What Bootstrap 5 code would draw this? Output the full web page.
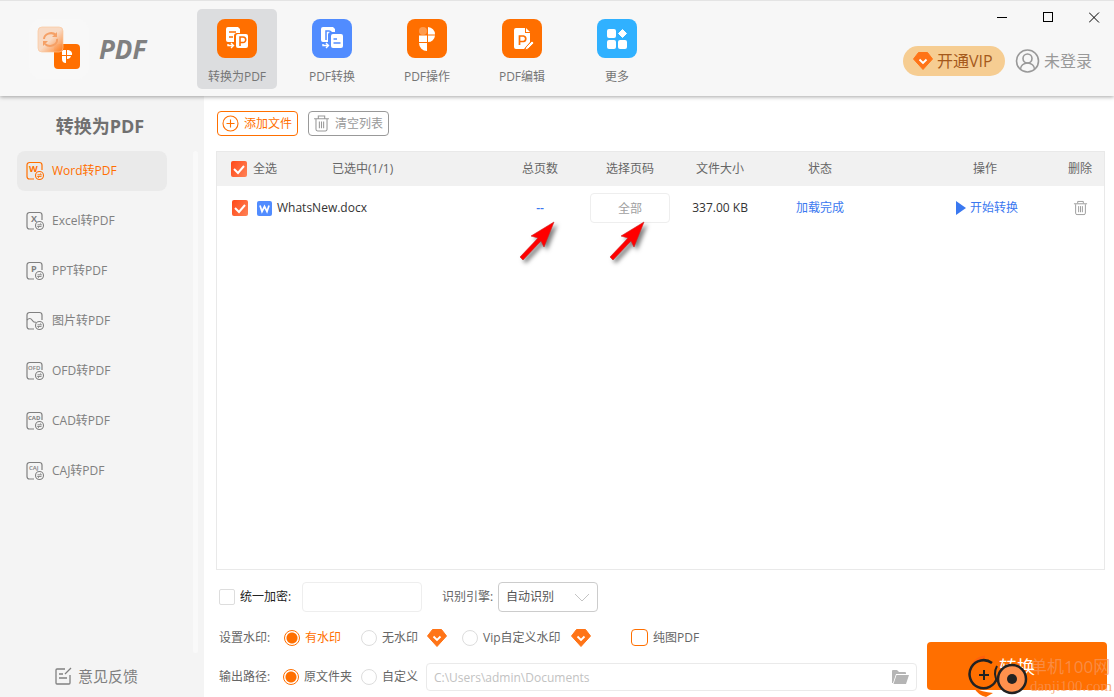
<!DOCTYPE html>
<html lang="zh-CN">
<head>
<meta charset="utf-8">
<meta name="viewport" content="width=device-width, initial-scale=1">
<title>转换为PDF</title>
<link href="https://cdn.jsdelivr.net/npm/bootstrap@5.3.0/dist/css/bootstrap.min.css" rel="stylesheet">
<style>
:root{--brand:#ff6f00;--blue:#3a78f0;--ink:#666;--soft:#808080}
body{font-family:"Open Sans","Noto Sans CJK SC",sans-serif;font-size:12px;line-height:18px;color:var(--ink);background:#fff}
button{font:inherit;color:inherit;background:none;border:0;padding:0}
a{color:inherit;text-decoration:none}
svg{display:block;flex:none}
.topbar{height:96px;background:#f7f7f7;border-top:1px solid #e4e4e4;box-shadow:0 1px 4px rgba(0,0,0,.35);position:relative;padding-left:29px}
.word-logo{font-size:26px;line-height:30px;font-weight:700;font-style:italic;color:#808080}
.brand-box{width:168px;gap:10px}
.tiles{gap:15px}
.tile{width:80px;height:80px;border-radius:5px;padding-top:10px;gap:9px;color:#757575}
.tile.active{background:#dcdddf}
.win-btn{width:40px;height:32px;color:#000}
.win-row{gap:6px}
.account{gap:10px;margin:13px 22px 0 0}
.vip{height:30px;width:102px;border-radius:15px;background:#f6cd92;color:#a5591b;font-size:16px;padding-left:10px}
.user{font-size:16px;color:#999}
.body-row,.work{min-height:0;min-width:0}
.side{width:204px;background:#f4f4f4;padding:17px 0 12px}
.side h1{font-size:18px;line-height:26px;font-weight:700;color:#707070;margin:0 4px 12px 0;text-align:center}
.side nav{gap:10px;margin-left:17px}
.side-link{height:40px;width:150px;border-radius:8px;padding-left:8px;gap:7px;color:var(--soft)}
.side-link.active{background:#eaeaea;color:var(--brand)}
.track{width:5px;background:#f9f9f9;border-radius:3px;margin-right:6px}
.feedback{font-size:15px;color:var(--soft);gap:6px;margin:14px 0 0 54px}
.tools{gap:10px;padding-left:1px}
.tool{height:25px;border:1px solid #999;border-radius:4px;color:#999;width:81px;gap:5px;padding-left:4px}
.tool.primary{border-color:var(--brand);color:var(--brand)}
.work{padding:15px 7px 6px 12px}
.sheet{border:1px solid #e9e9e9;margin:15px 2px 12px 0}
.files{table-layout:fixed;width:100%}
.files th{background:#f1f1f1;height:34px;font-weight:400;text-align:center;padding:0}
.files td{height:44px;text-align:center;padding:0;position:relative}
.files th.lead-cell,.files td.lead-cell{text-align:left}
.files .state{padding-right:35px}
.files .bin{padding-right:4px}
.pages{width:80px;height:30px}
.check-all{gap:6px;padding-left:14px}
.file-name{padding-left:15px;color:#333}
.file-name svg{margin:0 5px 0 9px}
.start{gap:4px;color:var(--blue);padding-left:4px}
.form-check-input{margin:0;width:16px;height:16px;float:none;flex:none;border-color:#ddd;background-color:#fff}
.form-check-input[type=checkbox]{border-radius:2px}
.form-check-input[type=checkbox]:checked{border:0;background-color:#ff5a24;background-image:url("data:image/svg+xml,%3csvg xmlns='http://www.w3.org/2000/svg' viewBox='0 0 16 16'%3e%3cpath fill='none' stroke='%23fff' stroke-width='2' d='M3 8l4 4 6-7'/%3e%3c/svg%3e"),linear-gradient(120deg,#ff4817,#ff8357)}
.form-check-input[type=radio]:checked{border-color:var(--brand);background-color:#fff;background-image:radial-gradient(circle,var(--brand) 5px,#fff 6px)}
.form-check-input.pure{border:1px solid var(--brand);border-radius:4px;width:17px;height:17px}
.field{border:1px solid #eee;border-radius:4px;background:#fff;font-size:12px;color:#a0a0a0;outline:0;min-width:0}
.options{min-width:0}
.option-row{padding-left:3px}
.option-row label{gap:5px}
.engine{width:100px;height:30px;border:1px solid #ccc;border-radius:4px;padding:0 7px;font-size:12px;color:#555;appearance:none;background:#fff url("data:image/svg+xml,%3csvg xmlns='http://www.w3.org/2000/svg' width='16' height='9'%3e%3cpath fill='none' stroke='%23c4c4c4' d='M1 1l7 7 7-7'/%3e%3c/svg%3e") no-repeat right 7px center}
.path-box{height:28px;border:1px solid #eaeaea;border-radius:4px;padding:0 7px}
.path-box input{border:0;outline:0;color:#c2c2c2;padding:2px 0 0;min-width:0;background:none}
.go{width:180px;height:48px;border-radius:4px;background:var(--brand);color:#fff;font-size:18px;position:relative;margin-bottom:1px;padding-top:2px}
.stamp{position:absolute;left:41px;top:12px;color:rgba(247,150,90,.75);line-height:20px;text-align:left;white-space:nowrap}
.stamp-text{padding-top:3px}
.stamp .site{font-size:17px}
.stamp .host{font-family:"Liberation Serif",serif;font-size:15px;line-height:18px}
.pointer{position:absolute;left:23px;top:34px;filter:drop-shadow(3px 3px 2px rgba(0,0,0,.5))}
</style>
</head>
<body>
<svg width="0" height="0" class="position-absolute">
<defs>
<symbol id="doc" viewBox="0 0 20 20"><path d="M17 9V4a2.500 2.500 0 0 0-2.500-2.500h-10A2.500 2.500 0 0 0 2 4v11.500A2.500 2.500 0 0 0 4.500 18H9" fill="none" stroke="currentColor" stroke-width="1.200"/><circle cx="14.500" cy="14.500" r="4" fill="none" stroke="currentColor" stroke-width="1.100"/><path d="M12.500 13.800h4l-1.500-1.300M16.500 15.500h-4l1.500 1.300" fill="none" stroke="currentColor" stroke-width=".9"/></symbol>
<symbol id="gem" viewBox="0 0 20 18"><path d="M5.500.500h9L19.500 7 10 17.500.500 7z" fill="#ff7417" stroke="#ff7417" stroke-linejoin="round"/><path d="M6.500 7.500l3.500 3.500 3.500-3.500" fill="none" stroke="#fff" stroke-width="1.800"/></symbol>
<symbol id="trash" viewBox="0 0 16 16"><path d="M1 3.500h14M5 3V1h6v2M2.800 4v9.500a1.500 1.500 0 0 0 1.500 1.500h7.400a1.500 1.500 0 0 0 1.500-1.500V4M6 6v6.500M8 6v6.500M10 6v6.500" fill="none" stroke="currentColor"/></symbol>
<symbol id="arrow" viewBox="0 0 38 42"><path d="M2 37L20 18l-7-2L36 2 26 27l-3-6L5 40z" fill="#f00" stroke="#c22" stroke-width=".6"/></symbol>
</defs>
</svg>
<div class="d-flex flex-column vh-100 overflow-hidden">
<header class="topbar d-flex flex-shrink-0">
  <div class="brand-box d-flex align-items-center flex-shrink-0">
    <svg width="60" height="60" viewBox="0 0 60 60"><defs><linearGradient id="lg" x1="0" y1="0" x2="1" y2="1"><stop offset=".5" stop-color="#f9d9c2"/><stop offset="1" stop-color="#ff7a1a"/></linearGradient></defs><rect width="60" height="60" rx="12" fill="#f8f8f8"/><rect x="25" y="25" width="26" height="25" rx="4" fill="#ff6f00"/><path d="M34 31h3v5h-4v-4zM38 31h1a4 4 0 0 1 4 5h-5zM38 37h4a4 4 0 0 1-4 3zM33 37h4v7a4 4 0 0 1-4-4z" fill="#fff"/><rect x="9" y="8" width="25" height="25" rx="4" fill="url(#lg)" stroke="#fbc49a" stroke-width=".7" opacity=".95"/><path d="M15 20a7 6 0 0 1 12-4M28 20a7 6 0 0 1-12 5" fill="none" stroke="#f5a066" stroke-width="2"/><path d="M28 13v5h-5zM14 27v-5h5z" fill="#f5a066"/></svg>
    <span class="word-logo">PDF</span>
  </div>
  <nav class="tiles d-flex flex-shrink-0 pt-2">
    <a href="#" class="tile active d-flex flex-column align-items-center"><svg width="40" height="40" viewBox="0 0 40 40"><rect width="40" height="39" rx="8" fill="#ff6f00"/><path d="M11 8h10l2 2v4h-3a3 3 0 0 0-3 3v6h-6a2 2 0 0 1-2-2V10a2 2 0 0 1 2-2z" fill="#fff"/><path d="M12 13h7M12 18h4" stroke="#ff6f00" stroke-width="1.600"/><rect x="19" y="15" width="12" height="14" rx="2" fill="#fff"/><path d="M23 27v-9h3a2.500 2.500 0 0 1 0 5.500h-3" fill="none" stroke="#ff6f00" stroke-width="1.600"/><path d="M11 25v1.500h5M14 24l2.500 2.500L14 29" fill="none" stroke="#fff" stroke-width="1.400"/></svg>转换为PDF</a>
    <a href="#" class="tile d-flex flex-column align-items-center"><svg width="40" height="40" viewBox="0 0 40 40"><rect width="40" height="39" rx="8" fill="#518cff"/><path d="M11 8h10l2 2v3h-4a3 3 0 0 0-3 3v7h-5a2 2 0 0 1-2-2V10a2 2 0 0 1 2-2z" fill="#fff"/><path d="M14 21v-9h3a2.500 2.500 0 0 1 2.500 2" fill="none" stroke="#518cff" stroke-width="1.500"/><rect x="19" y="15" width="12" height="14" rx="2" fill="#fff"/><path d="M21.500 20h3.500M21.500 24h7" stroke="#518cff" stroke-width="1.500"/><path d="M11 25v1.500h5M14 24l2.500 2.500L14 29" fill="none" stroke="#fff" stroke-width="1.400"/></svg>PDF转换</a>
    <a href="#" class="tile d-flex flex-column align-items-center"><svg width="40" height="40" viewBox="0 0 40 40"><rect width="40" height="39" rx="8" fill="#ff6f00"/><circle cx="16" cy="12" r="4" fill="#ff9b4d"/><path d="M21 8a7.500 7.500 0 0 1 7 7.500h-7zM12 16.500h8V23h-8zM21 16.500h7a7 7 0 0 1-7 6.500zM12 24h8v8a8 8 0 0 1-8-8z" fill="#fff"/></svg>PDF操作</a>
    <a href="#" class="tile d-flex flex-column align-items-center"><svg width="40" height="40" viewBox="0 0 40 40"><rect width="40" height="39" rx="8" fill="#ff6f00"/><path d="M14 9h9v5h5v9l-6 7h-8a2 2 0 0 1-2-2V11a2 2 0 0 1 2-2zM24 9l4 4h-4z" fill="#fff"/><path d="M17.500 26v-9h4a2.800 2.800 0 0 1 0 5.500h-4" fill="none" stroke="#ff6f00" stroke-width="1.700"/><path d="M23 31l1-3 6-6 2 2-6 6z" fill="#fff" stroke="#ff6f00" stroke-width=".8"/></svg>PDF编辑</a>
    <a href="#" class="tile d-flex flex-column align-items-center"><svg width="40" height="40" viewBox="0 0 40 40"><rect width="40" height="39" rx="8" fill="#30b1ff"/><g fill="#fff"><rect x="10" y="10" width="9" height="9" rx="2"/><rect x="10" y="21" width="9" height="9" rx="2"/><rect x="21" y="21" width="9" height="9" rx="2"/><path d="M25.500 10.500l4 4-4 4-4-4z" stroke="#fff" stroke-linejoin="round"/></g></svg>更多</a>
  </nav>
  <div class="ms-auto d-flex flex-column align-items-end">
    <div class="win-row d-flex">
      <button class="win-btn d-flex align-items-center justify-content-center" aria-label="最小化"><svg width="11" height="11" stroke="#000" shape-rendering="crispEdges"><path d="M0 5.500h10"/></svg></button>
      <button class="win-btn d-flex align-items-center justify-content-center" aria-label="最大化"><svg width="11" height="11" fill="none" stroke="#000" shape-rendering="crispEdges"><path d="M.5.500h9v9h-9z"/></svg></button>
      <button class="win-btn d-flex align-items-center justify-content-center" aria-label="关闭"><svg width="11" height="11" stroke="#000"><path d="M0 .5l10 10M10 .5l-10 10"/></svg></button>
    </div>
    <div class="account d-flex align-items-center">
      <button class="vip d-flex align-items-center gap-1"><svg width="20" height="18"><use href="#gem"/></svg>开通VIP</button>
      <button class="user d-flex align-items-center gap-1"><svg width="25" height="24" viewBox="0 0 25 24" fill="none" stroke="#999" stroke-width="1.600"><circle cx="12.500" cy="12" r="11"/><circle cx="12.500" cy="9.500" r="4.500"/><path d="M5.500 20a7 6 0 0 1 14 0"/></svg>未登录</button>
    </div>
  </div>
</header>
<div class="body-row d-flex flex-grow-1">
  <aside class="side d-flex flex-column flex-shrink-0">
    <h1>转换为PDF</h1>
    <div class="d-flex flex-grow-1 justify-content-between">
      <nav class="d-flex flex-column">
        <a href="#" class="side-link active d-flex align-items-center"><svg width="20" height="20"><use href="#doc"/><text x="4" y="11" font-size="9" font-weight="700" fill="currentColor">W</text></svg>Word转PDF</a>
        <a href="#" class="side-link d-flex align-items-center"><svg width="20" height="20"><use href="#doc"/><text x="6" y="11" font-size="9" font-weight="700" fill="currentColor">X</text></svg>Excel转PDF</a>
        <a href="#" class="side-link d-flex align-items-center"><svg width="20" height="20"><use href="#doc"/><text x="6" y="11" font-size="9" font-weight="700" fill="currentColor">P</text></svg>PPT转PDF</a>
        <a href="#" class="side-link d-flex align-items-center"><svg width="20" height="20"><use href="#doc"/><path d="M2 9q3-3 5 0t4 2" fill="none" stroke="currentColor" stroke-width="1.200"/></svg>图片转PDF</a>
        <a href="#" class="side-link d-flex align-items-center"><svg width="20" height="20"><use href="#doc"/><text x="3" y="9" font-size="6" font-weight="600" fill="currentColor">OFD</text></svg>OFD转PDF</a>
        <a href="#" class="side-link d-flex align-items-center"><svg width="20" height="20"><use href="#doc"/><text x="3" y="9" font-size="6" font-weight="700" fill="currentColor">CAD</text></svg>CAD转PDF</a>
        <a href="#" class="side-link d-flex align-items-center"><svg width="20" height="20"><use href="#doc"/><text x="4" y="9" font-size="6" font-weight="600" fill="currentColor">CAJ</text></svg>CAJ转PDF</a>
      </nav>
      <div class="track"></div>
    </div>
    <a href="#" class="feedback d-flex align-items-center"><svg width="18" height="18" fill="none" stroke="#808080" stroke-width="1.300"><path d="M11 2H3a1 1 0 0 0-1 1v13a1 1 0 0 0 1 1h12a1 1 0 0 0 1-1V8M17 1l-6 6M5 7h4M5 11h8"/></svg>意见反馈</a>
  </aside>
  <main class="work d-flex flex-column flex-grow-1">
    <div class="tools d-flex">
      <button class="tool primary d-flex align-items-center"><svg width="17" height="17" fill="none" stroke="#ff6f00" stroke-width="1.100"><circle cx="8.500" cy="8.500" r="7.500"/><path d="M8.500 4.500v8M4.500 8.500h8"/></svg>添加文件</button>
      <button class="tool d-flex align-items-center"><svg width="17" height="17"><use href="#trash"/></svg>清空列表</button>
    </div>
    <div class="sheet flex-grow-1">
      <table class="files">
        <colgroup><col style="width:115px"><col><col style="width:90px"><col style="width:90px"><col style="width:90px"><col style="width:145px"><col style="width:150px"><col style="width:44px"></colgroup>
        <thead><tr>
          <th class="lead-cell"><label class="check-all d-flex align-items-center"><input type="checkbox" class="form-check-input" checked>全选</label></th>
          <th class="lead-cell">已选中(1/1)</th><th>总页数</th><th>选择页码</th><th>文件大小</th><th class="state">状态</th><th>操作</th><th class="bin">删除</th>
        </tr></thead>
        <tbody><tr>
          <td colspan="2" class="lead-cell"><label class="file-name d-flex align-items-center"><input type="checkbox" class="form-check-input" checked><svg width="15" height="15" viewBox="0 0 15 15"><rect width="15" height="15" rx="2" fill="#518cff"/><path d="M3 4.500l2 6 2.500-5 2.500 5 2-6" fill="none" stroke="#fff" stroke-width="1.700"/></svg>WhatsNew.docx</label></td>
          <td><span class="fw-semibold" style="color:var(--blue)">--</span><svg class="pointer" width="38" height="42"><use href="#arrow"/></svg></td>
          <td><input class="field pages text-center" value="全部" aria-label="选择页码"><svg class="pointer" width="38" height="42"><use href="#arrow"/></svg></td>
          <td style="color:#333">337.00 KB</td>
          <td class="state" style="color:var(--blue)">加载完成</td>
          <td><a href="#" class="start d-flex align-items-center justify-content-center"><svg width="10" height="14"><path d="M0 0l10 7-10 7z" fill="#3a78f0"/></svg>开始转换</a></td>
          <td class="bin"><button class="d-block mx-auto" aria-label="删除" style="color:#999"><svg width="15" height="16"><use href="#trash"/></svg></button></td>
        </tr></tbody>
      </table>
    </div>
    <div class="d-flex align-items-end" style="gap:10px">
      <div class="options flex-grow-1">
        <div class="option-row d-flex align-items-center">
          <label class="d-flex align-items-center" style="width:83px;color:#222"><input type="checkbox" class="form-check-input">统一加密:</label>
          <input class="field" style="width:120px;height:30px" aria-label="统一加密">
          <label for="engine" style="width:56px;margin-left:20px">识别引擎:</label>
          <select id="engine" class="engine"><option>自动识别</option></select>
        </div>
        <div class="option-row d-flex align-items-center" style="height:51px">
          <span style="width:65px">设置水印:</span>
          <label class="d-flex align-items-center" style="width:77px;color:var(--brand)"><input type="radio" name="mark" class="form-check-input" checked>有水印</label>
          <label class="d-flex align-items-center" style="width:66px"><input type="radio" name="mark" class="form-check-input">无水印</label>
          <svg width="20" height="18"><use href="#gem"/></svg>
          <label class="d-flex align-items-center" style="width:109px;margin-left:15px"><input type="radio" name="mark" class="form-check-input">Vip自定义水印</label>
          <svg width="20" height="18"><use href="#gem"/></svg>
          <label class="d-flex align-items-center" style="margin-left:40px"><input type="checkbox" class="form-check-input pure">纯图PDF</label>
        </div>
        <div class="option-row d-flex align-items-center">
          <span style="width:64px">输出路径:</span>
          <label class="d-flex align-items-center" style="width:78px"><input type="radio" name="out" class="form-check-input" checked>原文件夹</label>
          <label class="d-flex align-items-center" style="width:65px"><input type="radio" name="out" class="form-check-input">自定义</label>
          <div class="path-box d-flex align-items-center flex-grow-1">
            <input class="flex-grow-1" value="C:\Users\admin\Documents" aria-label="输出路径">
            <button aria-label="浏览"><svg width="17" height="14"><path d="M0 13V1a1 1 0 0 1 1-1h4l2 2h6a1 1 0 0 1 1 1v1H4L1 13zM4.500 5H17l-3 9H1.500z" fill="#b5b5b5"/></svg></button>
          </div>
        </div>
      </div>
      <button class="go flex-shrink-0">转换
        <span class="stamp d-flex"><svg width="62" height="44" viewBox="0 0 62 44"><path d="M6 9a17 17 0 0 1 11-6" fill="none" stroke="#ff5f0a" stroke-width="3"/><path d="M6 34q8 4 19 5l-7 4q-8-2-12-9z" fill="#ff6a00"/><path d="M24 9a14 14 0 1 0 5 15" fill="none" stroke="#222" stroke-width="2.500"/><path d="M16 16v10M11 21h10M29 12a15 15 0 0 0 1 16" fill="none" stroke="#222" stroke-width="2"/><circle cx="44" cy="25" r="14" fill="#ff914d" stroke="#222" stroke-width="2.500"/><circle cx="44" cy="25" r="5" fill="#222"/></svg><span class="stamp-text d-flex flex-column"><span class="site">单机100网</span><span class="host">danji100.com</span></span></span>
      </button>
    </div>
  </main>
</div>
</div>
<script src="https://cdn.jsdelivr.net/npm/bootstrap@5.3.0/dist/js/bootstrap.bundle.min.js"></script>
</body>
</html>
